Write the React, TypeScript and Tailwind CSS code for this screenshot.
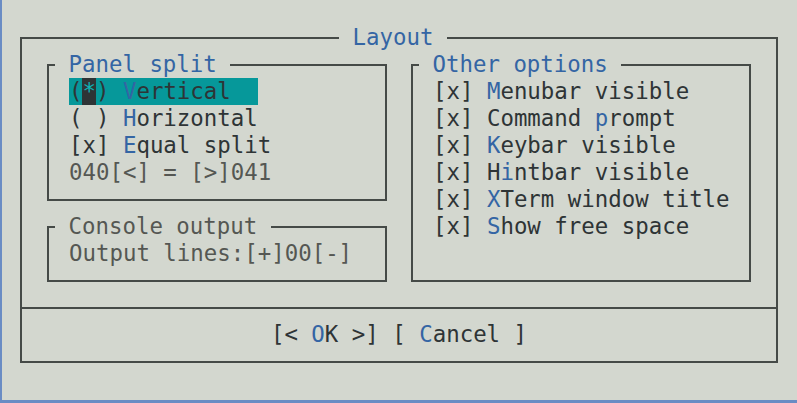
import type { ReactNode } from "react"

const line = "border-[#454a47]"

function Hot({ children }: { children: ReactNode }) {
  return <span className="text-[#3465a4]">{children}</span>
}

function Row({ children, dim }: { children: ReactNode; dim?: boolean }) {
  return (
    <div className={`h-[27px] whitespace-pre ${dim ? "text-[#555753]" : "text-[#2e3436]"}`}>
      {children}
    </div>
  )
}

function Box({
  title,
  dim,
  className = "",
  children,
}: {
  title: string
  dim?: boolean
  className?: string
  children: ReactNode
}) {
  return (
    <fieldset className={`border-2 ${line} ${className}`}>
      <legend className={`ml-[6px] px-[13.5px] ${dim ? "text-[#555753]" : "text-[#3465a4]"}`}>
        {title}
      </legend>
      <div className="pl-[20px] pb-[13px]">{children}</div>
    </fieldset>
  )
}

export default function App() {
  const options: [string, string, string][] = [
    ["", "M", "enubar visible"],
    ["Command ", "p", "rompt"],
    ["", "K", "eybar visible"],
    ["H", "i", "ntbar visible"],
    ["", "X", "Term window title"],
    ["", "S", "how free space"],
  ]

  return (
    <div className="h-[403px] w-[797px] overflow-hidden border-l-2 border-b-[3px] border-[#6a8cc4] bg-[#d3d7cf] pt-[24px] font-['DejaVu_Sans_Mono','Liberation_Mono',monospace] text-[22.4px] leading-[27px] text-[#2e3436]">
      <fieldset className={`ml-[18px] w-[758px] border-2 ${line}`}>
        <legend className="ml-[317px] px-[13.5px] text-[#3465a4]">Layout</legend>

        <div className="flex gap-[24px] px-[25px]">
          <div className="flex w-[340px] flex-col gap-[12px]">
            <Box title="Panel split">
              <Row>
                <span className="inline-block h-[27px] w-[189px] bg-[#06989a] align-top">
                  (<span className="inline-block h-[27px] bg-[#2e3436] align-top text-[#0fb3b5]">*</span>) <Hot>V</Hot>ertical
                </span>
              </Row>
              <Row>
                ( ) <Hot>H</Hot>orizontal
              </Row>
              <Row>
                [x] <Hot>E</Hot>qual split
              </Row>
              <Row dim>040[&lt;] = [&gt;]041</Row>
            </Box>
            <Box title="Console output" dim>
              <Row dim>Output lines:[+]00[-]</Row>
            </Box>
          </div>

          <Box title="Other options" className="w-[340px]">
            {options.map(([pre, key, rest]) => (
              <Row key={key}>
                [x] {pre}
                <Hot>{key}</Hot>
                {rest}
              </Row>
            ))}
          </Box>
        </div>

        <div className={`mt-[25px] border-t-2 ${line} pt-[12px] pb-[13px]`}>
          <div className="flex h-[27px] justify-center whitespace-pre">
            [&lt; <Hot>O</Hot>K &gt;] [ <Hot>C</Hot>ancel ]
          </div>
        </div>
      </fieldset>
    </div>
  )
}
